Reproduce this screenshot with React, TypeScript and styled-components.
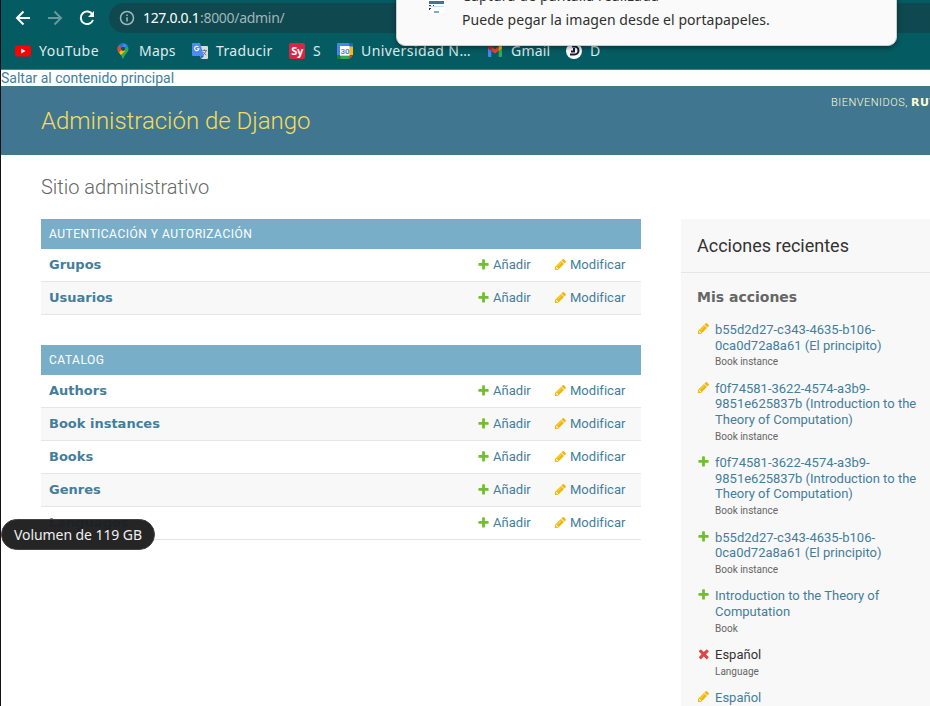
import React from 'react';
import styled, { createGlobalStyle, css } from 'styled-components';

const Global = createGlobalStyle`
  * { box-sizing: border-box; }
  html, body { margin: 0; padding: 0; overflow: hidden; }
  body { background: #fff; font-family: Roboto, sans-serif; font-size: 14px; color: #333; }
`;

const ui = css`font-family: 'Noto Sans', sans-serif;`;

const Window = styled.div`
  position: relative;
  width: 930px;
  height: 706px;
  overflow: hidden;
  border-left: 1px solid #180f18;
  background: #fff;
`;

const Browser = styled.div`
  height: 70px;
  background: #055b62;
  border-bottom: 1px solid #458489;
  overflow: hidden;
`;

const Toolbar = styled.div`
  display: flex;
  align-items: center;
  height: 30px;
  margin-top: 3px;
  padding-left: 13px;
`;

const NavIcon = styled.svg<{ $dim?: boolean }>`
  width: 18px;
  height: 18px;
  margin-right: 14px;
  flex: none;
  fill: none;
  stroke: ${p => (p.$dim ? '#67999d' : '#fff')};
  stroke-width: 2;
`;

const Address = styled.div`
  ${ui}
  display: flex;
  align-items: center;
  flex: 1;
  height: 30px;
  margin-left: -1px;
  padding-left: 10px;
  border-radius: 15px 0 0 15px;
  background: #0f484f;
  font-size: 14px;
  line-height: 18px;
  white-space: pre;
  svg { width: 16px; height: 16px; margin-right: 8px; fill: none; stroke: #a3b8bb; stroke-width: 1.5; }
`;

const UrlPart = styled.span<{ $host?: boolean; $w: number }>`
  display: block;
  width: ${p => p.$w}px;
  margin-top: -1px;
  color: ${p => (p.$host ? '#fff' : '#9fb6b9')};
  letter-spacing: ${p => (p.$host ? '-0.33px' : '-0.3px')};
`;

const Bookmarks = styled.div`
  display: flex;
  align-items: center;
  height: 36px;
  padding-left: 14px;
`;

const Bookmark = styled.div<{ $w: number; $ls?: number }>`
  ${ui}
  display: flex;
  align-items: center;
  flex: none;
  width: ${p => p.$w}px;
  color: #dfeaeb;
  font-size: 14px;
  letter-spacing: ${p => p.$ls ?? 0}px;
  line-height: 18px;
  white-space: nowrap;
  svg { width: 16px; height: 16px; margin-right: 8px; flex: none; }
`;

const Notice = styled.div`
  ${ui}
  position: absolute;
  left: 395px;
  top: -30px;
  width: 501px;
  height: 76px;
  padding: 14px 0 0 32px;
  display: flex;
  gap: 17px;
  background: #fafafa;
  border: 1px solid #c9cfcf;
  border-radius: 9px;
  box-shadow: 0 2px 5px rgba(0, 0, 0, 0.4);
  color: #303030;
  font-size: 14px;
  line-height: 23px;
  > svg { width: 16px; height: 28px; flex: none; }
`;

const NoticeLine = styled.div<{ $ls: number }>`
  height: 23px;
  letter-spacing: ${p => p.$ls}px;
  white-space: nowrap;
  &:first-child { line-height: 21px; }
`;

const Skip = styled.a`
  display: block;
  height: 16px;
  line-height: 16px;
  color: #447e9b;
`;

const Header = styled.header`
  display: flex;
  justify-content: space-between;
  height: 69px;
  padding: 10px 0 10px 40px;
  background: #417690;
  overflow: hidden;
`;

const Branding = styled.h1`
  margin: 10px 0 0;
  font-size: 24px;
  font-weight: 300;
  line-height: 30px;
  letter-spacing: -0.02px;
  color: #f5dd5d;
`;

const UserTools = styled.div`
  width: 99px;
  font-size: 11px;
  font-weight: 300;
  line-height: 13px;
  letter-spacing: 0.5px;
  text-transform: uppercase;
  white-space: nowrap;
  color: #ffc;
  strong { font-family: 'DejaVu Sans', sans-serif; font-weight: 700; }
`;

const Title = styled.h2`
  margin: 0 0 20px;
  font-size: 20px;
  font-weight: 300;
  line-height: 24px;
  color: #666;
`;

const Content = styled.main`
  padding: 20px 0 0 40px;
`;

const Columns = styled.div`
  display: grid;
  grid-template-columns: 600px 400px;
  column-gap: 40px;
`;

const Module = styled.section`
  margin-bottom: 30px;
`;

const Caption = styled.h3`
  margin: 0;
  height: 30px;
  padding: 0 8px;
  background: #79aec8;
  color: #fff;
  font-size: 12px;
  font-weight: 400;
  line-height: 30px;
  letter-spacing: 0.5px;
  text-transform: uppercase;
`;

const Glyph = styled.svg`
  width: 13px;
  height: 13px;
  flex: none;
`;

const ModelRow = styled.div<{ $alt?: boolean }>`
  display: grid;
  grid-template-columns: 1fr 77px 71px;
  height: 33px;
  padding: 0 16px 0 8px;
  border-bottom: 1px solid #e6e6e6;
  background: ${p => (p.$alt ? '#f8f8f8' : '#fff')};
  font-size: 13px;
  line-height: 32px;
  color: #447e9b;
  strong { font-family: 'DejaVu Sans', sans-serif; }
`;

const RowLink = styled.a`
  display: flex;
  align-items: flex-start;
  gap: 3px;
  letter-spacing: 0.02px;
  ${Glyph} { margin-top: 9px; }
`;

const Sidebar = styled.aside`
  height: 520px;
  background: #f8f8f8;
`;

const SideTitle = styled.h2`
  margin: 0 0 16px;
  padding: 16px;
  height: 54px;
  border-bottom: 1px solid #e6e6e6;
  font-size: 18px;
  font-weight: 400;
  line-height: 21px;
  color: #333;
`;

const SideSub = styled.h3`
  margin: 0 16px 17px;
  font: 700 14px/16px 'DejaVu Sans', sans-serif;
  color: #666;
`;

const Actions = styled.ul`
  margin: 0;
  padding: 0 16px;
  list-style: none;
`;

const Action = styled.li<{ $deleted?: boolean }>`
  display: flex;
  gap: 5px;
  margin-bottom: 12px;
  width: 230px;
  font-size: 13px;
  line-height: 15.6px;
  color: ${p => (p.$deleted ? '#333' : '#447e9b')};
  > div { white-space: pre; }
`;

const Kind = styled.div`
  height: 15.6px;
  font-size: 10px;
  line-height: 18.4px;
  color: #666;
`;

const Tip = styled.div`
  ${ui}
  position: absolute;
  left: 0;
  top: 519px;
  width: 154px;
  height: 31px;
  border: 1px solid #42423f;
  border-radius: 16px;
  background: rgba(30, 30, 30, 0.97);
  color: #f0f0f0;
  font-size: 14px;
  letter-spacing: -0.08px;
  line-height: 29px;
  text-align: center;
  white-space: nowrap;
`;

const glyphs = {
  add: ['#70bf2b', 'M1600 796v192q0 40-28 68t-68 28h-416v416q0 40-28 68t-68 28h-192q-40 0-68-28t-28-68v-416h-416q-40 0-68-28t-28-68v-192q0-40 28-68t68-28h416v-416q0-40 28-68t68-28h192q40 0 68 28t28 68v416h416q40 0 68 28t28 68z'],
  change: ['#efb80b', 'M491 1536l91-91-235-235-91 91v107h128v128h107zm523-928q0-22-22-22-10 0-17 7l-542 542q-7 7-7 17 0 22 22 22 10 0 17-7l542-542q7-7 7-17zm-54-192l416 416-832 832h-416v-416zm683 96q0 53-37 90l-166 166-416-416 166-165q36-38 90-38 53 0 91 38l235 234q37 39 37 91z'],
  remove: ['#dd4646', 'M1490 1322q0 40-28 68l-136 136q-28 28-68 28t-68-28l-294-294-294 294q-28 28-68 28t-68-28l-136-136q-28-28-28-68t28-68l294-294-294-294q-28-28-28-68t28-68l136-136q28-28 68-28t68 28l294 294 294-294q28-28 68-28t68 28l136 136q28 28 28 68t-28 68l-294 294 294 294q28 28 28 68z'],
};
type GlyphName = keyof typeof glyphs;

const Icon = ({ name }: { name: GlyphName }) => (
  <Glyph viewBox={name === 'remove' ? '60 60 1600 1600' : '0 0 1792 1792'}>
    <path fill={glyphs[name][0]} d={glyphs[name][1]} />
  </Glyph>
);

const apps = [
  { name: 'Autenticación y autorización', models: ['Grupos', 'Usuarios'] },
  { name: 'Catalog', models: ['Authors', 'Book instances', 'Books', 'Genres', 'Languages'] },
];

const actions: { icon: GlyphName; text: string; kind: string }[] = [
  { icon: 'change', text: 'b55d2d27-c343-4635-b106-\n0ca0d72a8a61 (El principito)', kind: 'Book instance' },
  { icon: 'change', text: 'f0f74581-3622-4574-a3b9-\n9851e625837b (Introduction to the\nTheory of Computation)', kind: 'Book instance' },
  { icon: 'add', text: 'f0f74581-3622-4574-a3b9-\n9851e625837b (Introduction to the\nTheory of Computation)', kind: 'Book instance' },
  { icon: 'add', text: 'b55d2d27-c343-4635-b106-\n0ca0d72a8a61 (El principito)', kind: 'Book instance' },
  { icon: 'add', text: 'Introduction to the Theory of\nComputation', kind: 'Book' },
  { icon: 'remove', text: 'Español', kind: 'Language' },
  { icon: 'change', text: 'Español', kind: 'Language' },
];

const YouTube = () => (
  <svg viewBox="0 0 16 16"><rect y="2.4" width="16" height="11.2" rx="2.6" fill="#f00" /><path d="M6.200 5.600v4.800L10.600 8z" fill="#fff" /></svg>
);
const Maps = () => (
  <svg viewBox="0 0 16 16">
    <clipPath id="pin"><path d="M8 .3a5.500 5.500 0 0 0-5.500 5.500c0 2 .9 3.200 2.200 4.700C6.200 12.200 7 13.600 7.300 15q.7 1.400 1.400 0c.3-1.400 1.100-2.800 2.600-4.500 1.300-1.500 2.200-2.700 2.200-4.700A5.500 5.500 0 0 0 8 .3z" /></clipPath>
    <g clipPath="url(#pin)">
      <path fill="#34a853" d="M0 0h16v16H0z" /><path fill="#fbbc04" d="M1 9l5-5 4 4-6 6z" />
      <path fill="#ea4335" d="M1 0l7 5-5 6-3-4z" /><path fill="#1a73e8" d="M4 2l4 4 6-3-4-4H5z" /><path fill="#4285f4" d="M8 6l5-4-3-2-4 4z" />
    </g>
    <circle cx="8" cy="5.800" r="2.100" fill="#0b5360" />
  </svg>
);
const Translate = () => (
  <svg viewBox="0 0 16 16">
    <path d="M6 3h9a1 1 0 0 1 1 1v11a1 1 0 0 1-1 1H9z" fill="#dadce0" />
    <path d="M1 0h7l4 13H1a1 1 0 0 1-1-1V1a1 1 0 0 1 1-1z" fill="#4c8bf5" />
    <path d="M8.500 13h3.500l-3 3z" fill="#3b62c0" />
    <path d="M6.500 4A2.200 2.200 0 1 0 7 5.700H4.900" fill="none" stroke="#fff" strokeWidth="1.100" />
    <path d="M10.300 7.500h4.700M12.600 6.300v1.200M14 8q-.6 2.300-3 4M11.300 9q1.200 2 3 3" fill="none" stroke="#5d7780" strokeWidth=".9" />
  </svg>
);
const Sy = () => (
  <svg viewBox="0 0 16 16"><rect width="16" height="16" rx="2" fill="#dc2446" /><text x="8" y="12" textAnchor="middle" fontFamily="Noto Sans" fontWeight="700" fontSize="11" letterSpacing="-.3" fill="#fff">Sy</text></svg>
);
const Calendar = () => (
  <svg viewBox="0 0 16 16">
    <path d="M0 1a1 1 0 0 1 1-1h11v4H4v8H0z" fill="#4285f4" /><path d="M12 0h3a1 1 0 0 1 1 1v3h-4z" fill="#1967d2" />
    <path d="M12.500 3.500H16V12h-3.500z" fill="#fbbc04" /><path d="M3 12.500h9.500V16H3z" fill="#34a853" /><path d="M0 12h3.500v4H1a1 1 0 0 1-1-1z" fill="#188038" />
    <path d="M12.500 12.500H16L12.500 16z" fill="#ea4335" /><path d="M3 3h9.700v9.700H3z" fill="#fff" />
    <text x="7.900" y="10.600" textAnchor="middle" fontFamily="Roboto" fontWeight="500" fontSize="8" letterSpacing="-.2" fill="#3578e5">30</text>
  </svg>
);
const Gmail = () => (
  <svg viewBox="0 0 16 16">
    <path d="M1 4v9a1 1 0 0 0 1 1h2.300V6z" fill="#4285f4" /><path d="M15 4v9a1 1 0 0 1-1 1h-2.300V6z" fill="#34a853" />
    <path d="M4.300 3.500L8 6.300l3.700-2.800v4.200L8 10.500 4.300 7.700z" fill="#ea4335" />
    <path d="M1 4.200q0-2 2-1.500l1.300.9v4.100L1 5.300z" fill="#c5221f" /><path d="M15 4.200q0-2-2-1.500l-1.300.9v4.100L15 5.300z" fill="#fbbc04" />
  </svg>
);
const DLogo = () => (
  <svg viewBox="0 0 16 16"><circle cx="8" cy="8" r="8" fill="#fff" /><path d="M6 3.500h2.500a4 4 0 0 1 0 8H4M8 5v3.500H5" fill="none" stroke="#171c38" strokeWidth="2" /></svg>
);

export default function App() {
  return (
    <Window>
      <Global />
      <Browser>
        <Toolbar>
          <NavIcon viewBox="0 0 18 18"><path d="M16 9H3M9.500 2.500L3 9l6.500 6.500" /></NavIcon>
          <NavIcon $dim viewBox="0 0 18 18"><path d="M2 9h13M8.500 2.500L15 9l-6.500 6.500" /></NavIcon>
          <NavIcon viewBox="0 0 18 18"><path d="M14.500 5.500A6.300 6.300 0 1 0 15 11" /><path d="M16 2v6h-6z" fill="#fff" stroke="none" /></NavIcon>
          <Address>
            <svg viewBox="0 0 16 16"><circle cx="8" cy="8" r="6.500" /><path d="M8 7.200v4.200M8 4.400v1.600" /></svg>
            <UrlPart $host $w={57}>127.0.0.1</UrlPart><UrlPart $w={120}>:8000/admin/</UrlPart>
          </Address>
        </Toolbar>
        <Bookmarks>
          <Bookmark $w={100} $ls={0.5}><YouTube /><span>YouTube</span></Bookmark>
          <Bookmark $w={77} $ls={0.2}><Maps /><span>Maps</span></Bookmark>
          <Bookmark $w={97} $ls={0.35}><Translate /><span>Traducir</span></Bookmark>
          <Bookmark $w={48}><Sy /><span>S</span></Bookmark>
          <Bookmark $w={150} $ls={0.42}><Calendar /><span>Universidad N…</span></Bookmark>
          <Bookmark $w={79} $ls={0.2}><Gmail /><span>Gmail</span></Bookmark>
          <Bookmark $w={50}><DLogo /><span>D</span></Bookmark>
        </Bookmarks>
      </Browser>

      <Skip>Saltar al contenido principal</Skip>
      <Header>
        <Branding>Administración de Django</Branding>
        <UserTools>Bienvenidos, <strong>Ruth</strong></UserTools>
      </Header>
      <Content>
        <Title>Sitio administrativo</Title>
        <Columns>
          <div>
            {apps.map(app => (
              <Module key={app.name}>
                <Caption>{app.name}</Caption>
                {app.models.map((m, i) => (
                  <ModelRow key={m} $alt={i % 2 === 1}>
                    <strong>{m}</strong>
                    <RowLink><Icon name="add" />Añadir</RowLink>
                    <RowLink><Icon name="change" />Modificar</RowLink>
                  </ModelRow>
                ))}
              </Module>
            ))}
          </div>
          <Sidebar>
            <SideTitle>Acciones recientes</SideTitle>
            <SideSub>Mis acciones</SideSub>
            <Actions>
              {actions.map((a, i) => (
                <Action key={i} $deleted={a.icon === 'remove'}>
                  <Icon name={a.icon} />
                  <div>{a.text}<Kind>{a.kind}</Kind></div>
                </Action>
              ))}
            </Actions>
          </Sidebar>
        </Columns>
      </Content>

      <Notice>
        <svg viewBox="0 0 16 28">
          <path d="M0 0h16v28H0z" fill="#fff" /><path d="M0 16h15v3H0z" fill="#417690" />
          <path d="M0 20h2v1H0zM4 20h1v1H4zM0 23h2v1H0zM0 24h1v1H0z" fill="#303a50" /><path d="M0 21h15v1H0z" fill="#c9ddeb" /><path d="M5 26h5v2H5z" fill="#79aec8" />
        </svg>
        <div>
          <NoticeLine $ls={0.16}>Captura de pantalla realizada</NoticeLine>
          <NoticeLine $ls={0.06}>Puede pegar la imagen desde el portapapeles.</NoticeLine>
        </div>
      </Notice>
      <Tip>Volumen de 119 GB</Tip>
    </Window>
  );
}
